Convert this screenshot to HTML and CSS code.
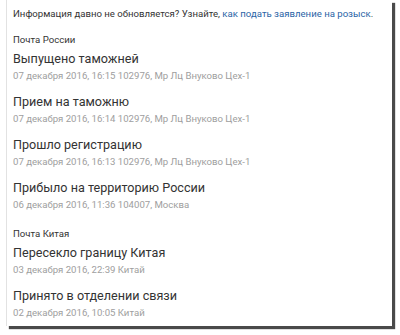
FILE: index.html
```html
<html>
  <head>
    <title>Отслеживание</title>
    <link rel="stylesheet" href="styles.css">
  </head>
  <body>
    <div id="trackCard">
      <p class="notice">Информация давно не обновляется? Узнайте, <a href="#">как подать заявление на розыск</a>.</p>

      <div class="carrier">
        <h3 class="carrierName">Почта России</h3>
        <div class="event">
          <p class="eventTitle">Выпущено таможней</p>
          <p class="eventMeta">07 декабря 2016, 16:15 102976, Мр Лц Внуково Цех-1</p>
        </div>
        <div class="event">
          <p class="eventTitle">Прием на таможню</p>
          <p class="eventMeta">07 декабря 2016, 16:14 102976, Мр Лц Внуково Цех-1</p>
        </div>
        <div class="event">
          <p class="eventTitle">Прошло регистрацию</p>
          <p class="eventMeta">07 декабря 2016, 16:13 102976, Мр Лц Внуково Цех-1</p>
        </div>
        <div class="event">
          <p class="eventTitle">Прибыло на территорию России</p>
          <p class="eventMeta">06 декабря 2016, 11:36 104007, Москва</p>
        </div>
      </div>

      <div class="carrier">
        <h3 class="carrierName">Почта Китая</h3>
        <div class="event">
          <p class="eventTitle">Пересекло границу Китая</p>
          <p class="eventMeta">03 декабря 2016, 22:39 Китай</p>
        </div>
        <div class="event">
          <p class="eventTitle">Принято в отделении связи</p>
          <p class="eventMeta">02 декабря 2016, 10:05 Китай</p>
        </div>
      </div>
    </div>
  </body>
</html>
```

FILE: styles.css
```css
body {
  margin: 0;
  background: #fff;
  font-family: Roboto, "Noto Sans", sans-serif;
  color: #333;
}

#trackCard {
  width: 379px;
  margin-left: 6px;
  padding: 6px 0 5px 6px;
  background: #fff;
  border-left: 1px solid #e2e2e2;
  box-shadow: 3px 3px 1px #4a4a4a;
}

.notice {
  margin: 0 0 11px 0;
  font-size: 9.6px;
  line-height: 16px;
  color: #333;
}

.notice a {
  color: #2a64a6;
  text-decoration: none;
}

.carrier + .carrier {
  margin-top: 14px;
}

.carrierName {
  margin: 0 0 3px 0;
  font-size: 9.6px;
  font-weight: normal;
  line-height: 14px;
  color: #333;
}

.event + .event {
  margin-top: 9px;
}

.eventTitle {
  margin: 0;
  font-size: 12.6px;
  line-height: 18px;
  color: #333;
}

.eventMeta {
  margin: 0;
  font-size: 9.6px;
  line-height: 16px;
  color: #9e9e9e;
}
```
